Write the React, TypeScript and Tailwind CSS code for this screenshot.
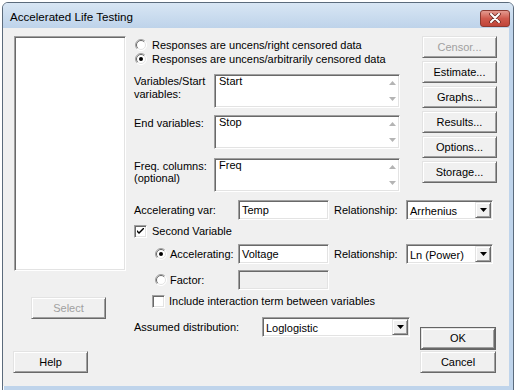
import React from "react";

// classic 3D borders
const sunken =
	"border border-t-[#a0a0a0] border-l-[#a0a0a0] border-r-white border-b-white shadow-[inset_1px_1px_0_#696969,inset_-1px_-1px_0_#e3e3e3]";
const raised =
	"border border-t-[#e3e3e3] border-l-[#e3e3e3] border-r-[#696969] border-b-[#696969] shadow-[inset_1px_1px_0_#ffffff,inset_-1px_-1px_0_#a0a0a0]";

function Button({ label, disabled, className = "" }: { label: string; disabled?: boolean; className?: string }) {
	return (
		<div className={`${raised} bg-[#f0f0f0] flex items-center justify-center ${disabled ? "text-[#a0a0a0]" : "text-black"} ${className}`}>
			{label}
		</div>
	);
}

function Radio({ checked }: { checked?: boolean }) {
	return (
		<svg width="12" height="12" viewBox="0 0 12 12" className="shrink-0">
			<circle cx="6" cy="6" r="5.5" fill="#ffffff" />
			<path d="M2.1 9.9 A5.5 5.5 0 0 1 9.9 2.1" stroke="#a0a0a0" fill="none" />
			<path d="M9.9 2.1 A5.5 5.5 0 0 1 2.1 9.9" stroke="#ffffff" fill="none" />
			<path d="M2.8 9.2 A4.5 4.5 0 0 1 9.2 2.8" stroke="#696969" fill="none" />
			<path d="M9.2 2.8 A4.5 4.5 0 0 1 2.8 9.2" stroke="#e3e3e3" fill="none" />
			{checked && <circle cx="6" cy="6" r="2" fill="#000000" />}
		</svg>
	);
}

function Checkbox({ checked }: { checked?: boolean }) {
	return (
		<div className={`${sunken} w-[13px] h-[13px] bg-white shrink-0 flex items-center justify-center`}>
			{checked && (
				<svg width="7" height="7" viewBox="0 0 7 7">
					<path d="M0 2 L0 4 L2 6 L7 1 L7 -1 L2 4 Z" fill="#000000" />
				</svg>
			)}
		</div>
	);
}

function TextArea({ value }: { value: string }) {
	return (
		<div className={`${sunken} w-[186px] h-[34px] bg-white flex`}>
			<div className="flex-1 pl-[4px] leading-[13px]">{value}</div>
			<div className="w-[14px] flex flex-col items-center justify-between py-[6px]">
				<svg width="7" height="4" viewBox="0 0 7 4">
					<path d="M0 4 L3.5 0 L7 4 Z" fill="#b4b4b4" />
				</svg>
				<svg width="7" height="4" viewBox="0 0 7 4">
					<path d="M0 0 L3.5 4 L7 0 Z" fill="#b4b4b4" />
				</svg>
			</div>
		</div>
	);
}

function Input({ value, disabled }: { value?: string; disabled?: boolean }) {
	return (
		<div className={`${sunken} w-[91px] h-[20px] ${disabled ? "bg-[#f0f0f0]" : "bg-white"} flex items-center pl-[3px]`}>
			{value}
		</div>
	);
}

function Select({ value, className = "" }: { value: string; className?: string }) {
	return (
		<div className={`${sunken} h-[20px] bg-white flex items-center p-[1px] ${className}`}>
			<div className="flex-1 pl-[2px] pt-[2px]">{value}</div>
			<div className={`${raised} w-[16px] h-full bg-[#f0f0f0] flex items-center justify-center`}>
				<svg width="7" height="4" viewBox="0 0 7 4">
					<path d="M0 0 L3.5 4 L7 0 Z" fill="#000000" />
				</svg>
			</div>
		</div>
	);
}

export default function App() {
	return (
		<div className="w-[515px] h-[390px] overflow-hidden bg-white font-['Liberation_Sans',Arial,sans-serif] text-[11px] text-black">
			<div className="ml-[2px] mt-[2px] w-[512px] h-[392px] border border-[#5b6b7c] rounded-t-[6px] bg-[#bfd4eb] flex flex-col shadow-[inset_1px_1px_0_#ffffff]">
				{/* Title bar */}
				<div className="h-[25px] flex items-center pl-[7px] pr-[3px] bg-gradient-to-b from-[#d8e6f4] to-[#bed3ea] rounded-t-[5px]">
					<span className="text-[11.6px] mt-[2px]">Accelerated Life Testing</span>
					<div className="ml-auto mt-[5px] w-[30px] h-[17px] rounded-[3px] border border-[#8b3b32] bg-gradient-to-b from-[#e39a90] via-[#cf5a4d] to-[#c0453a] flex items-center justify-center">
						<svg width="12" height="10" viewBox="0 0 12 10">
							<path d="M2 1 L10 9 M10 1 L2 9" stroke="#6b2a24" strokeWidth="3.6" strokeLinecap="round" />
							<path d="M2 1 L10 9 M10 1 L2 9" stroke="#ffffff" strokeWidth="2" strokeLinecap="round" />
						</svg>
					</div>
				</div>

				{/* Body */}
				<div className="flex-1 mr-[4px] mb-[7px] bg-[#f0f0f0] flex pt-[8px] pl-[11px]">
					{/* Left column */}
					<div className="w-[112px] flex flex-col">
						<div className={`${sunken} h-[235px] bg-white`} />
						<Button label="Select" disabled className="mt-[26px] ml-[17px] w-[75px] h-[22px]" />
						<Button label="Help" className="mt-[32px] -ml-[1px] w-[75px] h-[22px]" />
					</div>

					{/* Right area */}
					<div className="ml-[8px] w-[363px] flex flex-col">
						<div className="flex h-[156px]">
							<div className="w-[266px] flex flex-col">
								<div className="mt-[2px] h-[14px] flex items-center pl-[1px]">
									<Radio />
									<span className="ml-[5px]">Responses are uncens/right censored data</span>
								</div>
								<div className="h-[14px] flex items-center pl-[1px]">
									<Radio checked />
									<span className="ml-[5px]">Responses are uncens/arbitrarily censored data</span>
								</div>
								<div className="mt-[8px] flex">
									<div className="w-[80px] pt-[1px] leading-[13px]">
										Variables/Start
										<br />
										variables:
									</div>
									<TextArea value="Start" />
								</div>
								<div className="mt-[7px] flex">
									<div className="w-[80px] pt-[2px] leading-[13px]">End variables:</div>
									<TextArea value="Stop" />
								</div>
								<div className="mt-[9px] flex">
									<div className="w-[80px] pt-[2px] leading-[12px]">
										Freq. columns:
										<br />
										(optional)
									</div>
									<TextArea value="Freq" />
								</div>
							</div>
							<div className="ml-auto w-[75px] flex flex-col gap-[3px]">
								<Button label="Censor..." disabled className="h-[22px]" />
								<Button label="Estimate..." className="h-[22px]" />
								<Button label="Graphs..." className="h-[22px]" />
								<Button label="Results..." className="h-[22px]" />
								<Button label="Options..." className="h-[22px]" />
								<Button label="Storage..." className="h-[22px]" />
							</div>
						</div>

						<div className="mt-[8px] h-[20px] flex items-center">
							<div className="w-[104px]">Accelerating var:</div>
							<Input value="Temp" />
							<div className="ml-[5px] w-[72px]">Relationship:</div>
							<Select value="Arrhenius" className="w-[87px]" />
						</div>

						<div className="mt-[4px] h-[14px] flex items-center">
							<Checkbox checked />
							<span className="ml-[5px]">Second Variable</span>
						</div>

						<div className="mt-[6px] h-[20px] flex items-center">
							<div className="w-[104px] flex items-center pl-[21px]">
								<Radio checked />
								<span className="ml-[3px]">Accelerating:</span>
							</div>
							<Input value="Voltage" />
							<div className="ml-[5px] w-[72px]">Relationship:</div>
							<Select value="Ln (Power)" className="w-[87px]" />
						</div>

						<div className="mt-[6px] h-[20px] flex items-center">
							<div className="w-[104px] flex items-center pl-[21px]">
								<Radio />
								<span className="ml-[3px]">Factor:</span>
							</div>
							<Input disabled />
						</div>

						<div className="mt-[4px] h-[14px] flex items-center pl-[18px]">
							<Checkbox />
							<span className="ml-[4px]">Include interaction term between variables</span>
						</div>

						<div className="mt-[9px] flex items-start">
							<div className="w-[128px] h-[20px] flex items-center">Assumed distribution:</div>
							<Select value="Loglogistic" className="w-[148px]" />
							<div className="ml-auto mr-[1px] w-[76px] flex flex-col">
								<div className="mt-[10px] border border-[#646464]">
									<Button label="OK" className="h-[21px]" />
								</div>
								<Button label="Cancel" className="mt-[1px] h-[22px]" />
							</div>
						</div>
					</div>
				</div>
			</div>
		</div>
	);
}
